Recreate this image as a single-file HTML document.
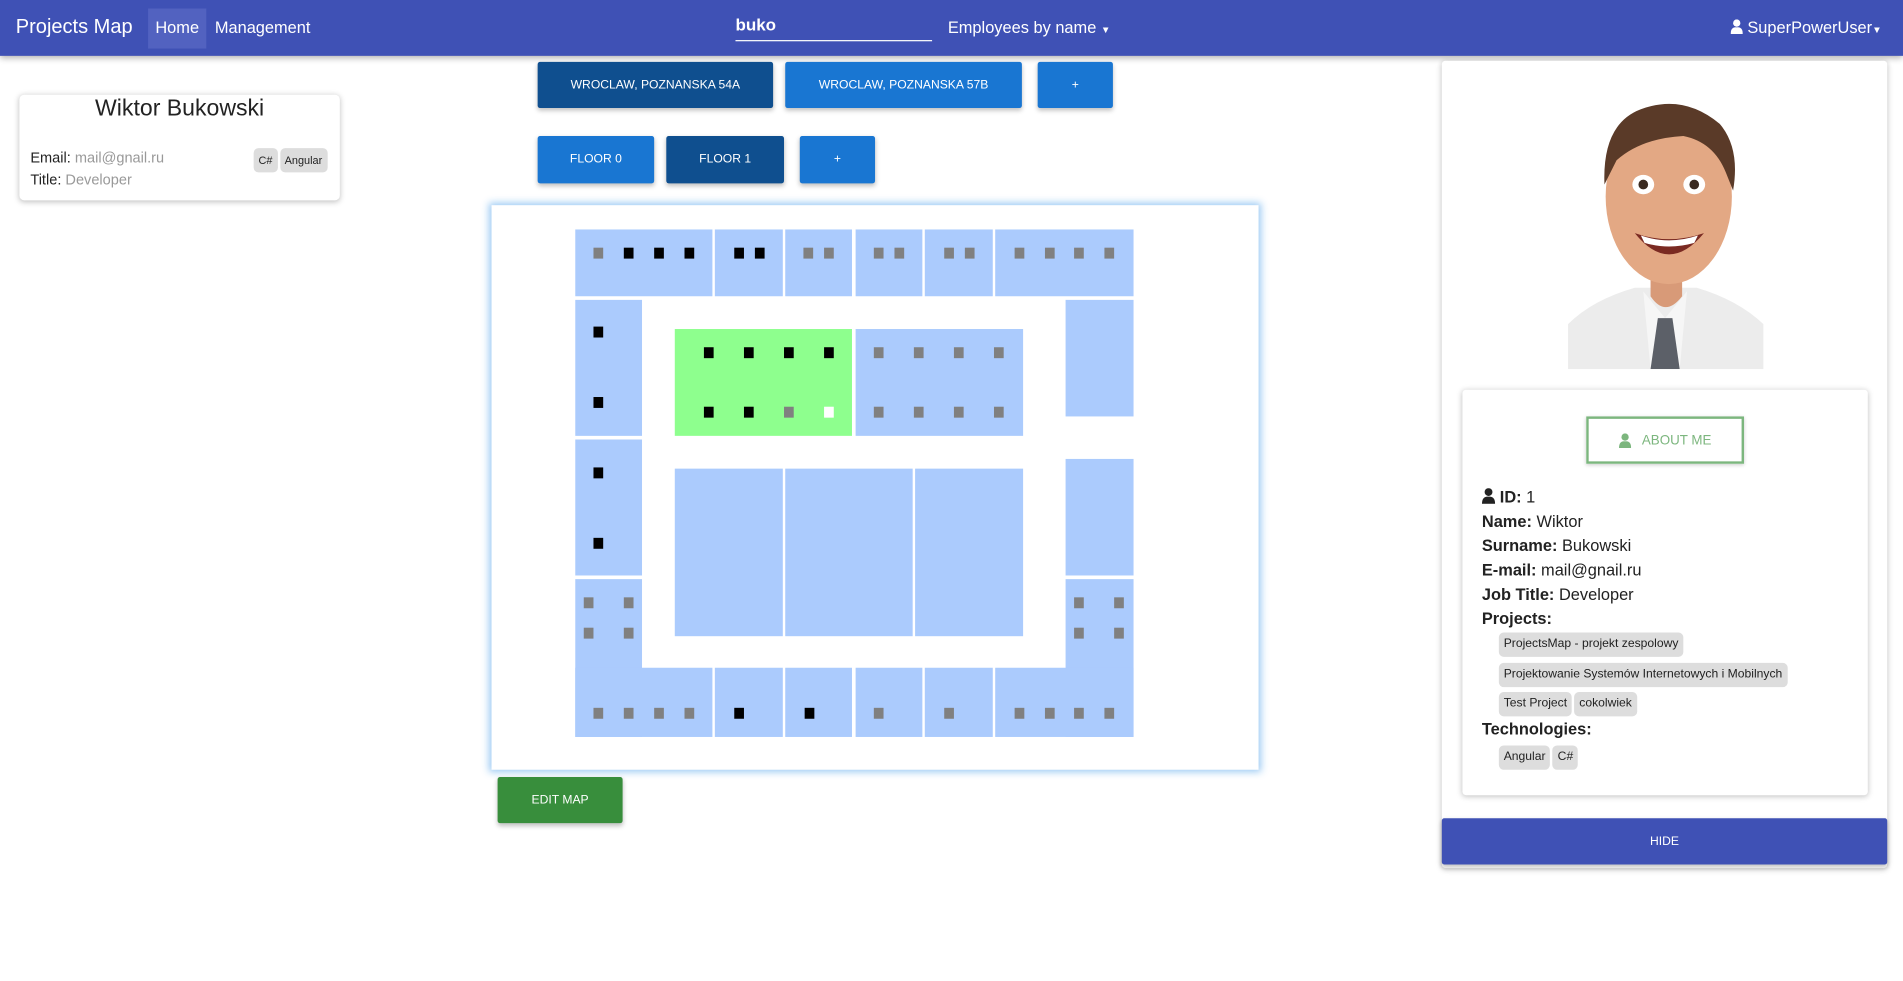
<!DOCTYPE html>
<html><head><meta charset="utf-8">
<style>
html,body{margin:0;padding:0;width:1903px;height:981px;overflow:hidden;background:#fff;font-family:"Liberation Sans",Arial,sans-serif;}
#w{position:absolute;left:0;top:0;width:1568px;height:808px;transform:scale(1.21365,1.2141);transform-origin:0 0;}
.a{position:absolute;box-sizing:border-box;}
.nav{left:0;top:0;width:1568px;height:46px;background:#3f51b5;box-shadow:0 2px 5px rgba(0,0,0,.3);color:#fff;}
.btn{position:absolute;color:#fff;font-size:10px;text-align:center;box-shadow:0 2px 4px rgba(0,0,0,.25);border-radius:2px;display:flex;align-items:center;justify-content:center;}
.dk{background:#0f4f8f}.lt{background:#1976d2}
.r{position:absolute;background:#abcbfd;}
.s{position:absolute;width:8px;height:9px;background:#808080;}
.k{background:#000}
.chip{display:inline-block;background:#ddd;border-radius:4px;padding:0 4px;height:20px;line-height:20px;font-size:10px;color:#222;margin:0 2px 0 0;vertical-align:top;}
.crow{height:24.5px;padding-left:14px;}
.info div{font-size:13.5px;color:#222;line-height:20px}
.info b{font-weight:bold}
</style></head><body><div id="w">
<div class="a nav">
 <div class="a" style="left:13px;top:13px;font-size:16.5px;">Projects Map</div>
 <div class="a" style="left:122px;top:7px;width:48px;height:33px;background:#5262c0;"></div>
 <div class="a" style="left:128px;top:15px;font-size:13.5px;">Home</div>
 <div class="a" style="left:177px;top:15px;font-size:13.5px;">Management</div>
 <div class="a" style="left:606px;top:12px;font-size:14px;font-weight:bold;">buko</div>
 <div class="a" style="left:606px;top:33px;width:162px;height:1px;background:#fff;"></div>
 <div class="a" style="left:781px;top:15px;font-size:13.5px;">Employees by name <span style="font-size:8px">&#9660;</span></div>
 <div class="a" style="left:1426px;top:15px;font-size:13.5px;"><svg width="10" height="12" viewBox="0 0 10 12" style="vertical-align:-1px"><circle cx="5" cy="3" r="3" fill="#fff"/><path d="M0 12 Q0 6 5 6.5 Q10 6 10 12Z" fill="#fff"/></svg> SuperPowerUser<span style="font-size:8px">&#9660;</span></div>
</div>

<div class="a" style="left:16px;top:78px;width:264px;height:87px;box-shadow:0 1px 5px rgba(0,0,0,.25);border-radius:4px;background:#fff;">
 <div class="a" style="left:0;top:1px;width:264px;text-align:center;font-size:19px;color:#222;">Wiktor Bukowski</div>
 <div class="a" style="left:9px;top:43px;font-size:12px;color:#222;line-height:18px;">Email: <span style="color:#999">mail@gnail.ru</span><br>Title: <span style="color:#999">Developer</span></div>
 <div class="a" style="left:193px;top:44px;"><span class="chip" style="font-size:9px">C#</span><span class="chip" style="font-size:9px">Angular</span></div>
</div>

<div class="btn dk" style="left:443px;top:51px;width:194px;height:38px;">WROCLAW, POZNANSKA 54A</div>
<div class="btn lt" style="left:647px;top:51px;width:195px;height:38px;">WROCLAW, POZNANSKA 57B</div>
<div class="btn lt" style="left:855px;top:51px;width:62px;height:38px;">+</div>
<div class="btn lt" style="left:443px;top:112px;width:96px;height:39px;">FLOOR 0</div>
<div class="btn dk" style="left:549px;top:112px;width:97px;height:39px;">FLOOR 1</div>
<div class="btn lt" style="left:659px;top:112px;width:62px;height:39px;">+</div>

<div class="a" style="left:405px;top:169px;width:632px;height:465px;background:#fff;box-shadow:0 0 6px 2px rgba(30,136,229,.45);"></div>
<div class="r" style="left:474px;top:189px;width:113px;height:55px"></div>
<div class="r" style="left:589px;top:189px;width:56px;height:55px"></div>
<div class="r" style="left:647px;top:189px;width:55px;height:55px"></div>
<div class="r" style="left:705px;top:189px;width:55px;height:55px"></div>
<div class="r" style="left:762px;top:189px;width:56px;height:55px"></div>
<div class="r" style="left:820px;top:189px;width:114px;height:55px"></div>
<div class="r" style="left:474px;top:247px;width:55px;height:112px"></div>
<div class="r" style="left:474px;top:362px;width:55px;height:112px"></div>
<div class="r" style="left:474px;top:477px;width:55px;height:130px"></div>
<div class="r" style="left:474px;top:550px;width:113px;height:57px"></div>
<div class="r" style="left:878px;top:247px;width:56px;height:96px"></div>
<div class="r" style="left:878px;top:378px;width:56px;height:96px"></div>
<div class="r" style="left:878px;top:477px;width:56px;height:130px"></div>
<div class="r" style="left:820px;top:550px;width:114px;height:57px"></div>
<div class="r" style="left:589px;top:550px;width:56px;height:57px"></div>
<div class="r" style="left:647px;top:550px;width:55px;height:57px"></div>
<div class="r" style="left:705px;top:550px;width:55px;height:57px"></div>
<div class="r" style="left:762px;top:550px;width:56px;height:57px"></div>
<div class="r" style="left:556px;top:271px;width:146px;height:88px;background:#8eff8e"></div>
<div class="r" style="left:705px;top:271px;width:138px;height:88px"></div>
<div class="r" style="left:556px;top:386px;width:89px;height:138px"></div>
<div class="r" style="left:647px;top:386px;width:105px;height:138px"></div>
<div class="r" style="left:754px;top:386px;width:89px;height:138px"></div>
<div class="s" style="left:489px;top:204px"></div><div class="s k" style="left:514px;top:204px"></div><div class="s k" style="left:539px;top:204px"></div><div class="s k" style="left:564px;top:204px"></div>
<div class="s k" style="left:605px;top:204px"></div><div class="s k" style="left:622px;top:204px"></div>
<div class="s" style="left:662px;top:204px"></div><div class="s" style="left:679px;top:204px"></div>
<div class="s" style="left:720px;top:204px"></div><div class="s" style="left:737px;top:204px"></div>
<div class="s" style="left:778px;top:204px"></div><div class="s" style="left:795px;top:204px"></div>
<div class="s" style="left:836px;top:204px"></div><div class="s" style="left:861px;top:204px"></div><div class="s" style="left:885px;top:204px"></div><div class="s" style="left:910px;top:204px"></div>
<div class="s k" style="left:489px;top:269px"></div><div class="s k" style="left:489px;top:327px"></div><div class="s k" style="left:489px;top:385px"></div><div class="s k" style="left:489px;top:443px"></div>
<div class="s k" style="left:580px;top:286px"></div><div class="s k" style="left:613px;top:286px"></div><div class="s k" style="left:646px;top:286px"></div><div class="s k" style="left:679px;top:286px"></div>
<div class="s k" style="left:580px;top:335px"></div><div class="s k" style="left:613px;top:335px"></div><div class="s" style="left:646px;top:335px"></div><div class="s" style="left:679px;top:335px;background:#fff"></div>
<div class="s" style="left:720px;top:286px"></div><div class="s" style="left:753px;top:286px"></div><div class="s" style="left:786px;top:286px"></div><div class="s" style="left:819px;top:286px"></div>
<div class="s" style="left:720px;top:335px"></div><div class="s" style="left:753px;top:335px"></div><div class="s" style="left:786px;top:335px"></div><div class="s" style="left:819px;top:335px"></div>
<div class="s" style="left:481px;top:492px"></div><div class="s" style="left:514px;top:492px"></div><div class="s" style="left:481px;top:517px"></div><div class="s" style="left:514px;top:517px"></div>
<div class="s" style="left:885px;top:492px"></div><div class="s" style="left:918px;top:492px"></div><div class="s" style="left:885px;top:517px"></div><div class="s" style="left:918px;top:517px"></div>
<div class="s" style="left:489px;top:583px"></div><div class="s" style="left:514px;top:583px"></div><div class="s" style="left:539px;top:583px"></div><div class="s" style="left:564px;top:583px"></div>
<div class="s k" style="left:605px;top:583px"></div><div class="s k" style="left:663px;top:583px"></div>
<div class="s" style="left:720px;top:583px"></div><div class="s" style="left:778px;top:583px"></div>
<div class="s" style="left:836px;top:583px"></div><div class="s" style="left:861px;top:583px"></div><div class="s" style="left:885px;top:583px"></div><div class="s" style="left:910px;top:583px"></div>

<div class="btn" style="left:410px;top:640px;width:103px;height:38px;background:#388e3c;">EDIT MAP</div>

<div class="a" style="left:1188px;top:50px;width:367px;height:665px;box-shadow:0 1px 5px rgba(0,0,0,.25);background:#fff;border-radius:3px;"></div>
<svg class="a" style="left:1292px;top:62px" width="161" height="242" viewBox="0 0 161 242">
 <rect width="161" height="242" fill="#fff"/>
 <path d="M0 242 L0 205 Q20 185 55 175 L106 175 Q140 185 161 205 L161 242Z" fill="#ececec"/>
 <path d="M62 178 L80 200 L98 178 L92 242 L68 242Z" fill="#f6f6f6"/>
 <path d="M74 200 L86 200 L92 242 L68 242Z" fill="#5c6068"/>
 <path d="M68 150 L68 182 Q80 200 94 182 L94 150Z" fill="#d89a78"/>
 <ellipse cx="83" cy="100" rx="52" ry="72" fill="#e3a884"/>
 <path d="M30 90 Q28 40 60 28 Q95 15 125 40 Q142 60 136 95 L130 80 Q120 55 95 50 Q60 52 40 70Z" fill="#5a3a28"/>
 <ellipse cx="62" cy="90" rx="9" ry="8" fill="#fff"/><circle cx="62" cy="90" r="4" fill="#3a2a20"/>
 <ellipse cx="104" cy="90" rx="9" ry="8" fill="#fff"/><circle cx="104" cy="90" r="4" fill="#3a2a20"/>
 <path d="M55 130 Q83 165 112 130 Q83 140 55 130Z" fill="#7a2a22"/>
 <path d="M60 132 Q83 140 107 132 L104 138 Q83 144 63 138Z" fill="#fff"/>
</svg>
<div class="a" style="left:1205px;top:321px;width:334px;height:334px;box-shadow:0 1px 5px rgba(0,0,0,.25);background:#fff;border-radius:3px;">
 <div class="a" style="left:102px;top:22px;width:130px;height:39px;border:2px solid #7cb67e;box-shadow:0 1px 3px rgba(0,0,0,.2);color:#7cb67e;font-size:11px;display:flex;align-items:center;justify-content:center;">
  <svg width="10" height="12" viewBox="0 0 10 12" style="margin-right:9px"><circle cx="5" cy="3" r="3" fill="#7cb67e"/><path d="M0 12 Q0 6 5 6.5 Q10 6 10 12Z" fill="#7cb67e"/></svg>ABOUT ME</div>
 <div class="a info" style="left:16px;top:79px;width:310px;">
  <div><svg width="11" height="13" viewBox="0 0 10 12" style="vertical-align:-1px"><circle cx="5" cy="3" r="3" fill="#222"/><path d="M0 12 Q0 6 5 6.5 Q10 6 10 12Z" fill="#222"/></svg> <b>ID:</b> 1</div>
  <div><b>Name:</b> Wiktor</div>
  <div><b>Surname:</b> Bukowski</div>
  <div><b>E-mail:</b> mail@gnail.ru</div>
  <div><b>Job Title:</b> Developer</div>
  <div><b>Projects:</b></div>
  <div class="crow" style="margin-top:1px"><span class="chip">ProjectsMap - projekt zespolowy</span></div>
  <div class="crow"><span class="chip">Projektowanie Systemów Internetowych i Mobilnych</span></div>
  <div class="crow"><span class="chip">Test Project</span><span class="chip">cokolwiek</span></div>
  <div style="margin-top:-4px"><b>Technologies:</b></div>
  <div class="crow" style="margin-top:3px"><span class="chip">Angular</span><span class="chip">C#</span></div>
 </div>
</div>
<div class="btn" style="left:1188px;top:674px;width:367px;height:38px;background:#3f51b5;font-size:10px;">HIDE</div>
</div></body></html>
